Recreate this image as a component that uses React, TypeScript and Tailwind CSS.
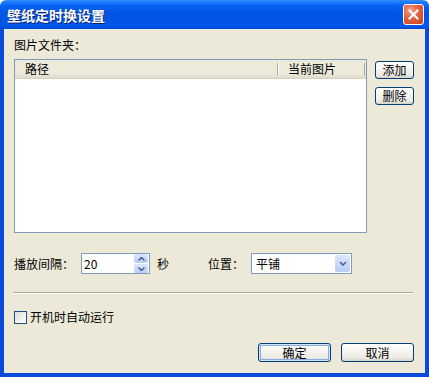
import React from "react";

const font = { fontFamily: '"Noto Sans CJK SC", "Noto Sans", sans-serif' };

const XpButton = ({ label, wide, def }: { label: string; wide?: boolean; def?: boolean }) => (
  <button
    className={
      "flex items-center justify-center rounded-[3px] border border-[#003C74] bg-[linear-gradient(180deg,#FFFFFF_0%,#F4F3EE_50%,#ECEBE6_80%,#D6D0C5_100%)] text-[12px] leading-none text-black " +
      (wide ? "h-[19px] w-[73px]" : "h-[18px] w-[39px]") +
      (def ? " shadow-[inset_0_0_0_1px_#CEE7FF,inset_0_0_0_2px_#89ADE4]" : "")
    }
  >
    {label}
  </button>
);

export default function App() {
  return (
    <div className="h-[377px] w-[429px] bg-white text-black" style={font}>
      <div className="flex h-full flex-col">
        {/* title bar */}
        <div className="flex h-[29px] items-center justify-between rounded-t-[6px] bg-[linear-gradient(180deg,#3A8CF5_0%,#1C7BFF_8%,#0762F2_20%,#0055E5_45%,#0054E3_70%,#0058EC_88%,#0049D2_100%)] pl-[7px] pr-[5px]">
          <span className="text-[14px] font-bold leading-none text-white [text-shadow:1px_1px_0_#0A1F6E]">
            壁纸定时换设置
          </span>
          <div className="flex h-[21px] w-[21px] items-center justify-center rounded-[3px] border border-white bg-[radial-gradient(circle_at_35%_30%,#F2A38A_0%,#E0603E_45%,#C83F1C_100%)]">
            <svg width="11" height="11" viewBox="0 0 11 11">
              <path d="M1.5 1.5 L9.5 9.5 M9.5 1.5 L1.5 9.5" stroke="white" strokeWidth="2.2" strokeLinecap="square" />
            </svg>
          </div>
        </div>

        {/* body */}
        <div className="flex flex-1 flex-col border-x-4 border-b-4 border-[#0A4AD8] bg-[#ECE9D8] pl-[10px] pr-[11px] text-[12px] leading-[14px]">
          <div className="mt-[9px]">图片文件夹：</div>

          <div className="mt-[7px] flex">
            <div className="flex h-[174px] w-[355px] flex-col border border-[#7F9DB9] bg-white">
              <div className="flex h-[19px] border-b border-[#D6D2C2] bg-[linear-gradient(180deg,#EBEADB_0%,#EBEADB_75%,#E2DECD_100%)] shadow-[inset_0_-2px_0_#E2DECD]">
                <div className="flex w-[262px] items-center pl-[10px]">路径</div>
                <div className="my-[3px] w-px bg-[#ACA899]" />
                <div className="my-[3px] w-px bg-white" />
                <div className="flex w-[85px] items-center pl-[9px]">当前图片</div>
                <div className="my-[3px] w-px bg-[#ACA899]" />
              </div>
            </div>
            <div className="ml-[8px] mt-[2px] flex flex-col gap-[8px]">
              <XpButton label="添加" />
              <XpButton label="删除" />
            </div>
          </div>

          {/* interval / position row */}
          <div className="mt-[20px] flex h-[21px] items-center">
            <span className="w-[67px]">播放间隔：</span>
            <div className="flex h-[21px] w-[69px] items-center border border-[#7F9DB9] bg-white pl-[2px] pr-[1px]">
              <span className="flex-1">20</span>
              <div className="flex flex-col gap-px">
                <div className="flex h-[9px] w-[14px] items-center justify-center rounded-[2px] bg-[linear-gradient(180deg,#DCE6FD_0%,#B9CCF9_100%)]">
                  <svg width="7" height="4" viewBox="0 0 7 4">
                    <path d="M0.5 3.5 L3.5 0.5 L6.5 3.5" fill="none" stroke="#4D6185" strokeWidth="1.5" />
                  </svg>
                </div>
                <div className="flex h-[9px] w-[14px] items-center justify-center rounded-[2px] bg-[linear-gradient(180deg,#DCE6FD_0%,#B9CCF9_100%)]">
                  <svg width="7" height="4" viewBox="0 0 7 4">
                    <path d="M0.5 0.5 L3.5 3.5 L6.5 0.5" fill="none" stroke="#4D6185" strokeWidth="1.5" />
                  </svg>
                </div>
              </div>
            </div>
            <span className="ml-[7px] w-[51px]">秒</span>
            <span className="w-[43px]">位置：</span>
            <div className="flex h-[21px] w-[101px] items-center border border-[#7F9DB9] bg-white pl-[4px] pr-[1px]">
              <span className="flex-1">平铺</span>
              <div className="flex h-[17px] w-[15px] items-center justify-center rounded-[2px] bg-[linear-gradient(180deg,#DCE6FD_0%,#B9CCF9_100%)]">
                <svg width="8" height="5" viewBox="0 0 8 5">
                  <path d="M1 1 L4 4 L7 1" fill="none" stroke="#4D6185" strokeWidth="1.6" />
                </svg>
              </div>
            </div>
          </div>

          {/* separator */}
          <div className="mt-[18px] ml-[-1px] h-px w-[400px] bg-[#ACA899] shadow-[0_1px_0_#FFFFFF]" />

          {/* autorun checkbox */}
          <div className="mt-[17px] flex items-center gap-[3px]">
            <div className="h-[13px] w-[13px] border border-[#1C5180] bg-[linear-gradient(135deg,#DCDCD7_0%,#F5F5F3_70%,#FFFFFF_100%)]" />
            <span>开机时自动运行</span>
          </div>

          {/* dialog buttons */}
          <div className="mt-[19px] flex justify-end gap-[10px] pr-[-1px]">
            <XpButton label="确定" wide def />
            <XpButton label="取消" wide />
          </div>
        </div>
      </div>
    </div>
  );
}
